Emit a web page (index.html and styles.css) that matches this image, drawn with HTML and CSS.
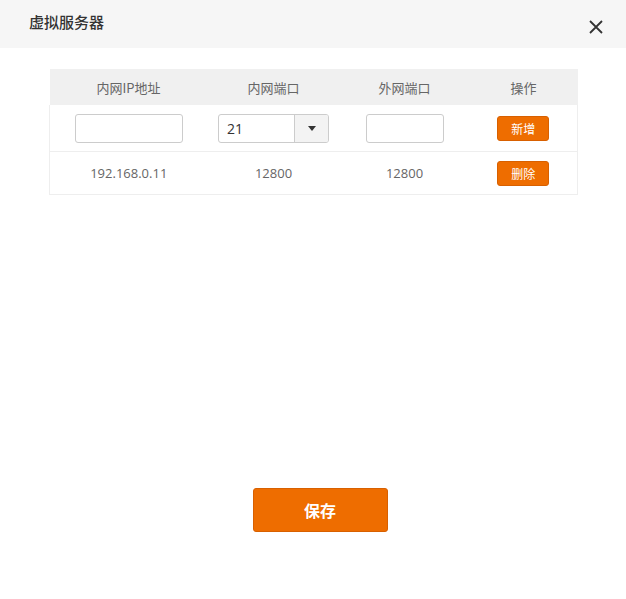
FILE: index.html
```html
<!DOCTYPE html>
<html lang="zh-CN">
<head>
<meta charset="utf-8">
<link rel="stylesheet" href="styles.css">
</head>
<body>
<div class="dialog">
  <div class="head">
    <div class="title">虚拟服务器</div>
    <svg class="close" width="14" height="14" viewBox="0 0 14 14"><path d="M1 1L13 13M13 1L1 13" stroke="#333" stroke-width="1.8" fill="none"/></svg>
  </div>
  <div class="body">
    <table class="tbl">
      <colgroup><col class="c1"><col class="c2"><col class="c3"><col class="c4"></colgroup>
      <thead>
        <tr><th>内网IP地址</th><th>内网端口</th><th>外网端口</th><th>操作</th></tr>
      </thead>
      <tbody>
        <tr class="edit">
          <td><input class="inp ip" type="text"></td>
          <td>
            <div class="sel"><span class="val">21</span><span class="arrow"><svg width="8" height="5" viewBox="0 0 8 5"><path d="M0 0H8L4 5Z" fill="#333"/></svg></span></div>
          </td>
          <td><input class="inp port" type="text"></td>
          <td><button class="btn">新增</button></td>
        </tr>
        <tr class="data">
          <td>192.168.0.11</td>
          <td>12800</td>
          <td>12800</td>
          <td><button class="btn">删除</button></td>
        </tr>
      </tbody>
    </table>
  </div>
  <div class="foot"><button class="save">保存</button></div>
</div>
</body>
</html>
```
FILE: styles.css
```css
html, body { margin: 0; padding: 0; background: #fff; }
body { font-family: "Open Sans", "Noto Sans CJK SC", sans-serif; color: #666; width: 626px; height: 599px; overflow: hidden; }
.dialog { width: 626px; }
.head { height: 48px; background: #f6f6f6; display: flex; align-items: center; justify-content: space-between; padding: 0 23px 0 29px; box-sizing: border-box; }
.title { font-family: "Noto Sans CJK SC", sans-serif; font-size: 15px; font-weight: 500; color: #333; margin-top: -5px; }
.close { margin-top: 6px; }
.body { padding: 21px 49px 0 49px; height: 440px; box-sizing: border-box; }
.tbl { width: 528px; border-collapse: collapse; table-layout: fixed; font-size: 13px; }
.c1 { width: 158px; } .c2 { width: 132px; } .c3 { width: 130px; } .c4 { width: 108px; }
.tbl th { height: 36px; background: #f0f0f0; font-family: "Noto Sans CJK SC", sans-serif; font-weight: normal; color: #666; font-size: 13px; padding: 0; }
.tbl td { text-align: center; padding: 0; border-bottom: 1px solid #eee; }
.tbl tbody tr td:first-child { border-left: 1px solid #eee; }
.tbl tbody tr td:last-child { border-right: 1px solid #eee; }
.edit td { height: 46px; }
.data td { height: 42px; color: #666; }
.inp { box-sizing: border-box; height: 29px; border: 1px solid #ccc; border-radius: 3px; padding: 0 6px; display: inline-block; vertical-align: middle; font-size: 13px; margin: 0; }
.ip { width: 108px; }
.port { width: 78px; }
.sel { display: inline-flex; width: 111px; height: 29px; box-sizing: border-box; border: 1px solid #ccc; border-radius: 3px; vertical-align: middle; text-align: left; }
.sel .val { flex: 1; padding-left: 8px; line-height: 27px; font-size: 14px; color: #333; }
.sel .arrow { width: 33px; border-left: 1px solid #ccc; background: #f3f3f3; display: flex; align-items: center; justify-content: center; border-radius: 0 2px 2px 0; }
.btn { width: 52px; height: 25px; background: #ee6d00; border: 1px solid #d86000; border-radius: 3px; color: #fff; font-family: "Noto Sans CJK SC", sans-serif; font-size: 12px; padding: 0; vertical-align: middle; }
.foot { display: flex; justify-content: center; padding-left: 14px; }
.save { width: 135px; height: 44px; background: #ee6d00; border: 1px solid #d86000; border-radius: 3px; color: #fff; font-family: "Noto Sans CJK SC", sans-serif; font-size: 16px; font-weight: bold; padding: 0; }
```
